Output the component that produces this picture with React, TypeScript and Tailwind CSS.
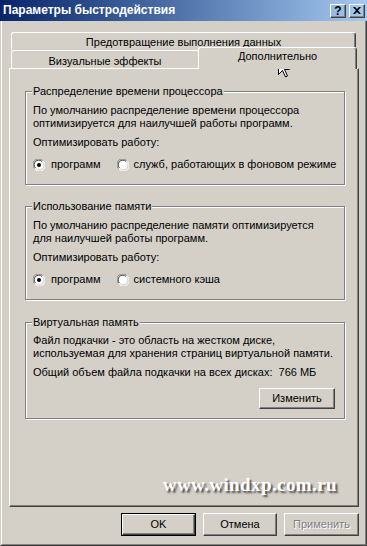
import React from "react";

function Radio({ checked }: { checked?: boolean }) {
  return (
    <svg width="12" height="12" viewBox="0 0 12 12" className="shrink-0">
      <circle cx="6" cy="6" r="5.5" fill="#ffffff" />
      <path d="M1.5 9.5 A5.5 5.5 0 0 1 9.5 1.5" fill="none" stroke="#808080" strokeWidth="1" />
      <path d="M2.5 9 A4.5 4.5 0 0 1 9 2.5" fill="none" stroke="#404040" strokeWidth="1" />
      <path d="M10.5 2.5 A5.5 5.5 0 0 1 2.5 10.5" fill="none" stroke="#ffffff" strokeWidth="1" />
      <path d="M9.5 3 A4.5 4.5 0 0 1 3 9.5" fill="none" stroke="#d4d0c8" strokeWidth="1" />
      {checked && <circle cx="6" cy="6" r="2" fill="#000000" />}
    </svg>
  );
}

function WinButton({
  children,
  def,
  disabled,
  className,
}: {
  children: React.ReactNode;
  def?: boolean;
  disabled?: boolean;
  className?: string;
}) {
  return (
    <div className={`${def ? "border border-black" : ""} ${className ?? ""}`}>
      <div className="h-full border border-t-white border-l-white border-r-[#404040] border-b-[#404040] shadow-[inset_-1px_-1px_0_#808080] flex items-center justify-center">
        <span className={disabled ? "text-[#808080] [text-shadow:1px_1px_0_#ffffff]" : ""}>{children}</span>
      </div>
    </div>
  );
}

function Group({
  title,
  className,
  children,
}: {
  title: string;
  className?: string;
  children: React.ReactNode;
}) {
  return (
    <div
      className={`relative border border-[#808080] shadow-[inset_1px_1px_0_#ffffff,1px_1px_0_#ffffff] mr-[1px] ${className ?? ""}`}
    >
      <span className="absolute left-[6px] top-[-7px] bg-[#d4d0c8] px-[1px] leading-[13px]">{title}</span>
      {children}
    </div>
  );
}

export default function App() {
  return (
    <div className="w-[367px] h-[546px] bg-[#d4d0c8] text-[11px] leading-[13px] text-black font-['Liberation_Sans',Arial,sans-serif] overflow-hidden relative">
      <div className="h-full flex flex-col border-l border-l-[#d4d0c8] border-r border-r-[#404040] border-b border-b-[#404040]">
        <div className="h-full flex flex-col border-l border-l-white border-r border-r-[#808080] border-b border-b-[#808080]">
          {/* Title bar */}
          <div className="h-[21px] shrink-0 bg-gradient-to-r from-[#0a246a] to-[#a6caf0] flex items-center pl-[3px] pr-[2px] -ml-[2px] -mr-[2px]">
            <span className="text-white font-bold text-[12px]">Параметры быстродействия</span>
            <div className="ml-auto flex gap-[3px]">
              <WinButton className="w-[16px] h-[14px]">
                <span className="font-bold text-[12px] leading-[10px] block">?</span>
              </WinButton>
              <WinButton className="w-[16px] h-[14px]">
                <svg width="8" height="7" viewBox="0 0 8 7">
                  <path d="M0 0 L2 0 L4 2 L6 0 L8 0 L5 3.5 L8 7 L6 7 L4 5 L2 7 L0 7 L3 3.5 Z" fill="#000" />
                </svg>
              </WinButton>
            </div>
          </div>

          {/* Tabs */}
          <div className="ml-[7px] mr-[6px] mt-[11px] flex flex-col">
            <div className="h-[18px] ml-[2px] mr-[3px] border-t border-l border-t-white border-l-white border-r border-r-[#404040] shadow-[inset_-1px_0_0_#808080] rounded-t-[3px] flex items-center justify-center pt-[1px]">
              Предотвращение выполнения данных
            </div>
            <div className="h-[18px] ml-[2px] flex items-end">
              <div className="w-[187px] h-[18px] border-t border-l border-t-white border-l-white rounded-tl-[3px] flex items-center justify-center pt-[3px]">
                Визуальные эффекты
              </div>
              <div className="relative top-[1px] z-10 w-[159px] h-[22px] bg-[#d4d0c8] border-t border-l border-t-white border-l-white border-r border-r-[#404040] shadow-[inset_-1px_0_0_#808080] rounded-t-[3px] flex justify-center pt-[2px]">
                Дополнительно
              </div>
            </div>

            {/* Panel */}
            <div className="h-[439px] border border-t-white border-l-white border-r-[#404040] border-b-[#404040] shadow-[inset_-1px_-1px_0_#808080] flex flex-col pl-[15px] pr-[12px] pt-[22px]">
              <Group title="Распределение времени процессора" className="h-[94px] pl-[7px] pt-[12px]">
                <p>По умолчанию распределение времени процессора</p>
                <p>оптимизируется для наилучшей работы программ.</p>
                <p className="mt-[6px]">Оптимизировать работу:</p>
                <div className="mt-[9px] flex items-center">
                  <Radio checked />
                  <span className="ml-[6px]">программ</span>
                  <span className="ml-[16px]"><Radio /></span>
                  <span className="ml-[5px]">служб, работающих в фоновом режиме</span>
                </div>
              </Group>

              <Group title="Использование памяти" className="h-[94px] mt-[21px] pl-[7px] pt-[12px]">
                <p>По умолчанию распределение памяти оптимизируется</p>
                <p>для наилучшей работы программ.</p>
                <p className="mt-[6px]">Оптимизировать работу:</p>
                <div className="mt-[9px] flex items-center">
                  <Radio checked />
                  <span className="ml-[6px]">программ</span>
                  <span className="ml-[16px]"><Radio /></span>
                  <span className="ml-[5px]">системного кэша</span>
                </div>
              </Group>

              <Group title="Виртуальная память" className="h-[97px] mt-[22px] pl-[7px] pt-[11px] flex flex-col">
                <p>Файл подкачки - это область на жестком диске,</p>
                <p>используемая для хранения страниц виртуальной памяти.</p>
                <p className="mt-[6px]">Общий объем файла подкачки на всех дисках:&nbsp; 766 МБ</p>
                <div className="mt-[9px] flex justify-end pr-[9px]">
                  <WinButton className="w-[76px] h-[21px]">Изменить</WinButton>
                </div>
              </Group>

              <div className="flex-1" />
              <div className="flex justify-end pr-[9px] pb-[12px]">
                <span className="text-white font-bold text-[19px] leading-[19px] tracking-[0.4px] font-['Liberation_Serif','Times_New_Roman',serif] [text-shadow:2px_2px_2px_#4a4a4a]">
                  www.windxp.com.ru
                </span>
              </div>
            </div>
          </div>

          {/* Bottom buttons */}
          <div className="mt-[6px] mr-[6px] flex justify-end gap-[7px]">
            <WinButton def className="w-[75px] h-[23px]">OK</WinButton>
            <WinButton className="w-[74px] h-[23px]">Отмена</WinButton>
            <WinButton disabled className="w-[75px] h-[23px]">Применить</WinButton>
          </div>
        </div>
      </div>

      {/* Mouse cursor */}
      <svg className="absolute left-[278px] top-[58px]" width="13" height="20" viewBox="0 0 13 20">
        <path d="M0.5 0.5 L0.5 16.5 L4.5 12.5 L7.5 19 L9.5 18 L6.5 11.5 L11.5 11.5 Z" fill="#ffffff" stroke="#000000" strokeWidth="1" strokeLinejoin="miter" />
      </svg>
    </div>
  );
}
